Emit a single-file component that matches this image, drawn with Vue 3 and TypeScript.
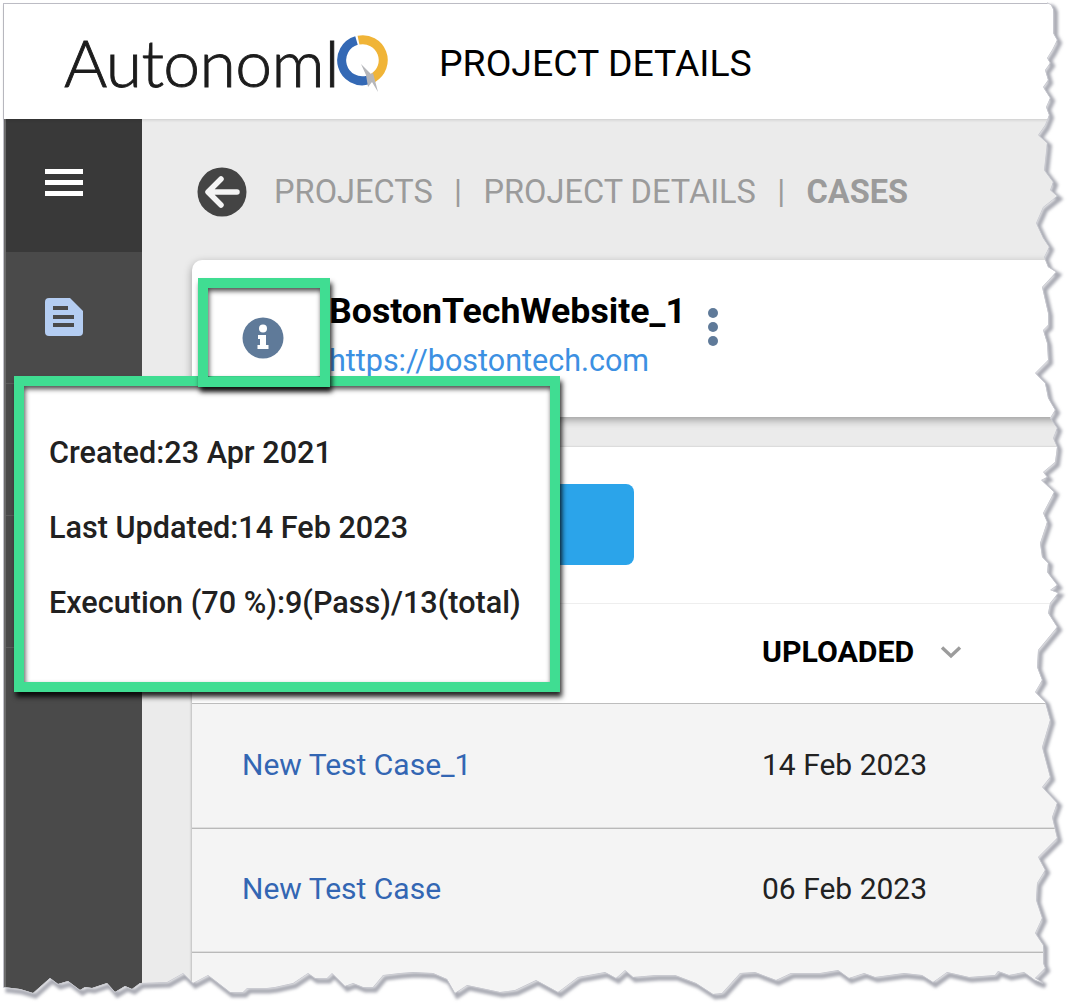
<template>
  <div class="page">
    <div class="frame">
      <header class="topbar">
        <div class="logo">
          <span class="logo-text">AutonomI</span>
          <svg class="logo-q" width="56" height="66" viewBox="336 29 56 66">
            <path d="M356.500 40.500A20.500 20.500 0 1 0 368 80" fill="none" stroke="#3469b5" stroke-width="9" />
            <path d="M358.500 40.200A20.500 20.500 0 0 1 373 78" fill="none" stroke="#f0b437" stroke-width="9" />
            <path d="M361 64L371 74L373 73L378 92L372 82L368 87L366 75Z" fill="#b5b6ba" />
          </svg>
        </div>
        <h1 class="page-title">PROJECT DETAILS</h1>
      </header>

      <div class="body">
        <aside class="sidebar">
          <div class="menu-btn">
            <span></span><span></span><span></span>
          </div>
          <div class="side-item">
            <svg width="40" height="40" viewBox="0 0 40 40">
              <path d="M5 1h21l13 13v21a4 4 0 0 1-4 4H5a4 4 0 0 1-4-4V5a4 4 0 0 1 4-4Z" fill="#b4cdf2" />
              <path d="M9 11h15M9 20h21M9 28h21" stroke="#4a4a4a" stroke-width="4" fill="none" />
            </svg>
          </div>
          <div class="side-item"></div>
          <div class="side-item"></div>
          <div class="side-rest"></div>
        </aside>

        <main class="content">
          <nav class="crumbs">
            <svg class="back" width="50" height="50" viewBox="0 0 50 50">
              <circle cx="25" cy="25" r="24.500" fill="#444" />
              <path d="M40 25H12M24 12L11 25L24 38" fill="none" stroke="#f4f4f4" stroke-width="5.500" stroke-linecap="round" stroke-linejoin="round" />
            </svg>
            <span>PROJECTS</span>
            <i>|</i>
            <span>PROJECT DETAILS</span>
            <i>|</i>
            <b>CASES</b>
          </nav>

          <section class="project-card">
            <div class="info-cell">
              <svg width="42" height="42" viewBox="0 0 42 42">
                <circle cx="21" cy="21" r="20.500" fill="#5f7a99" />
                <circle cx="21" cy="11.500" r="4" fill="#fff" />
                <path d="M16 18h8v10h2.500v4H15.500v-4H18v-6h-2Z" fill="#fff" />
              </svg>
            </div>
            <div class="project-text">
              <div class="project-name">BostonTechWebsite_1</div>
              <a class="project-link">https://bostontech.com</a>
            </div>
            <div class="dots"><span></span><span></span><span></span></div>
          </section>

          <section class="panel">
            <div class="toolbar"><div class="add-btn"></div></div>
            <div class="table">
              <div class="row head">
                <div></div>
                <div class="sort">
                  UPLOADED
                  <svg width="22" height="14" viewBox="0 0 22 14">
                    <path d="M2 2.500L11 11L20 2.500" fill="none" stroke="#9c9c9c" stroke-width="3.400" />
                  </svg>
                </div>
              </div>
              <div v-for="c in cases" :key="c.name" class="row item">
                <a class="case-name">{{ c.name }}</a>
                <div class="case-date">{{ c.date }}</div>
              </div>
              <div class="row item"></div>
            </div>
          </section>
        </main>
      </div>
    </div>

    <div class="mark mark-popup">
      <p v-for="line in infoLines" :key="line">{{ line }}</p>
    </div>
    <div class="mark mark-icon"></div>

    <svg class="torn" width="1070" height="1006" viewBox="0 0 1070 1006">
      <defs>
        <clipPath id="outside"><path :d="outsidePath" clip-rule="evenodd" /></clipPath>
        <filter id="soft" x="-5%" y="-5%" width="110%" height="110%"><feGaussianBlur stdDeviation="1.400" /></filter>
      </defs>
      <path :d="outsidePath" fill="#fff" fill-rule="evenodd" />
      <g clip-path="url(#outside)">
        <path :d="edgePath" transform="translate(2.500 3)" fill="none" stroke="#a9aab3" stroke-width="5" filter="url(#soft)" />
        <path :d="edgePath" fill="none" stroke="#c6c7ce" stroke-width="1.400" />
      </g>
    </svg>
  </div>
</template>

<script setup lang="ts">
const cases = [
  { name: 'New Test Case_1', date: '14 Feb 2023' },
  { name: 'New Test Case', date: '06 Feb 2023' },
]

const infoLines = [
  'Created:23 Apr 2021',
  'Last Updated:14 Feb 2023',
  'Execution (70 %):9(Pass)/13(total)',
]

// torn paper outline, clockwise from the top right corner
const rightEdge: number[][] = [
  [1047, 3], [1051, 5], [1053, 9], [1053, 33], [1057, 40], [1052, 50], [1047, 58], [1050, 63], [1045, 70], [1048, 80],
  [1043, 87], [1050, 98], [1046, 107], [1049, 115], [1045, 125], [1038, 135], [1047, 143], [1044, 170], [1053, 182],
  [1050, 190], [1057, 196], [1043, 207], [1036, 223], [1043, 238], [1049, 247], [1044, 257], [1048, 267], [1056, 272],
  [1042, 287], [1045, 300], [1048, 313], [1048, 325], [1043, 330], [1047, 343], [1048, 360], [1035, 373], [1045, 383],
  [1048, 398], [1055, 410], [1050, 418], [1057, 428], [1053, 438], [1057, 447], [1055, 462], [1043, 472], [1047, 477],
  [1041, 480], [1054, 492], [1043, 513], [1047, 522], [1040, 543], [1042, 557], [1048, 563], [1047, 572], [1057, 585],
  [1050, 590], [1058, 593], [1050, 603], [1048, 613], [1057, 627], [1038, 650], [1037, 667], [1042, 680], [1035, 692],
  [1045, 702], [1050, 720], [1042, 747], [1050, 777], [1042, 787], [1057, 803], [1052, 817], [1057, 838], [1038, 857],
  [1045, 870], [1037, 883], [1036, 900], [1042, 918], [1035, 933], [1043, 945], [1043, 963], [1045, 968], [1035, 978],
  [1043, 983],
]

const bottomEdge: number[][] = [
  [1035, 980], [1024, 972], [1009, 975], [998, 971], [995, 975], [969, 977], [947, 972], [933, 982], [922, 975],
  [904, 973], [875, 977], [864, 973], [849, 978], [838, 970], [820, 973], [791, 973], [776, 980], [755, 972], [740, 973],
  [722, 993], [713, 994], [696, 983], [675, 975], [656, 975], [633, 977], [625, 970], [616, 978], [605, 972], [578, 977],
  [558, 992], [536, 980], [515, 990], [500, 992], [467, 985], [455, 993], [447, 979], [433, 973], [413, 972], [400, 973],
  [383, 975], [373, 987], [363, 987], [353, 983], [345, 986], [332, 973], [327, 978], [315, 978], [308, 973], [293, 983],
  [275, 987], [267, 988], [247, 988], [243, 992], [230, 992], [208, 975], [193, 983], [183, 973], [167, 982], [140, 983],
  [132, 989], [125, 986], [115, 992], [107, 983], [92, 988], [85, 987], [80, 990], [68, 981], [58, 984], [50, 978],
  [33, 993], [20, 989], [3, 987],
]

const toPath = (pts: number[][]) => pts.map((p, i) => `${i ? 'L' : 'M'}${p[0]} ${p[1]}`).join('')

const edgePath = toPath([...rightEdge, ...bottomEdge])
const outsidePath = `M0 0H1070V1006H0Z${toPath([[0, 0], ...rightEdge, ...bottomEdge, [0, 987]])}Z`
</script>

<style scoped>
.page {
  position: relative;
  width: 1070px;
  height: 1006px;
  overflow: hidden;
  background: #fff;
  font-family: Roboto, "Liberation Sans", sans-serif;
}

.frame {
  height: 1003px;
  margin: 3px 0 0 3px;
  border-top: 1.5px solid #c1c1c9;
  border-left: 1.5px solid #c1c1c9;
  display: flex;
  flex-direction: column;
}

.topbar {
  height: 115px;
  flex: none;
  display: flex;
  align-items: center;
  background: #fff;
  padding-left: 60px;
  position: relative;
  box-shadow: 0 1px 3px rgba(0, 0, 0, 0.14);
}

.logo {
  width: 375px;
  flex: none;
  display: flex;
  align-items: center;
}

.logo-text {
  width: 271.500px;
  flex: none;
  font-family: Lato, sans-serif;
  font-weight: 300;
  font-size: 66px;
  line-height: 66px;
  letter-spacing: -0.6px;
  color: #1c1c1c;
  -webkit-text-stroke: 0.9px #1c1c1c;
}

.page-title {
  margin: 2px 0 0;
  font-size: 37.400px;
  font-weight: 400;
  color: #000;
}

.body {
  flex: 1;
  display: flex;
  min-height: 0;
}

.sidebar {
  width: 136px;
  flex: none;
  display: flex;
  flex-direction: column;
  border-left: 2px solid #6b6b6b;
  background: #4a4a4a;
}

.menu-btn {
  height: 133px;
  flex: none;
  background: #393939;
  display: flex;
  flex-direction: column;
  align-items: center;
  gap: 6px;
  padding: 50px 20px 0 0;
  box-sizing: border-box;
}

.menu-btn span {
  width: 38px;
  height: 5px;
  background: #fff;
}

.side-item {
  height: 132px;
  flex: none;
  display: flex;
  align-items: center;
  justify-content: center;
  padding: 0 21px 2px 0;
  box-sizing: border-box;
  border-bottom: 1px solid #5c5c5c;
}

.content {
  flex: 1;
  min-width: 0;
  background: #ebebeb;
  padding-left: 50px;
}

.crumbs {
  height: 141px;
  display: flex;
  align-items: center;
  font-size: 32.600px;
  color: #9b9b9b;
  box-sizing: border-box;
  padding-top: 5px;
}

.crumbs i {
  font-style: normal;
  margin: 0 21.300px;
}

.crumbs b {
  font-weight: 700;
}

.back {
  margin: 0 27px 0 5px;
}

.project-card {
  height: 157px;
  display: flex;
  background: #fff;
  border-radius: 10px 0 0 0;
  box-shadow: 0 3px 8px rgba(0, 0, 0, 0.35);
  position: relative;
}

.info-cell {
  width: 137px;
  flex: none;
  display: flex;
  justify-content: center;
  padding: 57px 0 0 5px;
  box-sizing: border-box;
}

.project-text {
  padding-top: 29px;
}

.project-name {
  font-size: 35.700px;
  font-weight: 700;
  color: #000;
  line-height: 44px;
}

.project-link {
  display: block;
  margin-top: 8px;
  font-size: 30.500px;
  line-height: 40px;
  color: #3c90e2;
}

.dots {
  margin: 48px 0 0 22px;
  display: flex;
  flex-direction: column;
  gap: 4px;
}

.dots span {
  width: 10px;
  height: 10px;
  border-radius: 50%;
  background: #5f7a99;
}

.panel {
  margin-top: 30px;
  background: #fff;
  box-shadow: -1px 0 2px rgba(0, 0, 0, 0.2);
}

.toolbar {
  height: 156px;
  padding: 37px 0 0 51px;
  box-sizing: border-box;
}

.add-btn {
  width: 391px;
  height: 81px;
  border-radius: 8px;
  background: #2ba4ea;
}

.row {
  display: grid;
  grid-template-columns: 520px 1fr;
  align-items: center;
  padding-left: 50px;
  box-sizing: border-box;
}

.head {
  height: 101px;
  border-top: 1px solid #eee;
  border-bottom: 1px solid #bdbdbd;
}

.sort {
  display: flex;
  align-items: center;
  gap: 26px;
  font-size: 30.300px;
  font-weight: 700;
  color: #000;
  padding-bottom: 4px;
}

.item {
  height: 124.500px;
  background: #f4f4f4;
  border-bottom: 1px solid #b9b9b9;
  box-shadow: inset 0 -1px 0 #dedede;
  font-size: 30px;
  padding-bottom: 3px;
}

.case-name {
  color: #3366b3;
}

.case-date {
  color: #222;
}

.mark {
  position: absolute;
  box-sizing: border-box;
  border: 10px solid #40dd92;
  box-shadow: 2px 5px 5px rgba(0, 0, 0, 0.85), inset 1px 3px 5px rgba(0, 0, 0, 0.7);
}

.mark-icon {
  left: 198px;
  top: 278px;
  width: 132px;
  height: 109px;
}

.mark-popup {
  left: 14px;
  top: 376px;
  width: 546px;
  height: 316px;
  background: #fff;
  padding: 49px 0 0 25px;
  color: #212121;
  font-size: 30.600px;
  font-weight: 500;
}

.mark-popup p {
  margin: 0 0 40px;
  line-height: 35px;
}

.torn {
  position: absolute;
  left: 0;
  top: 0;
  pointer-events: none;
}
</style>
